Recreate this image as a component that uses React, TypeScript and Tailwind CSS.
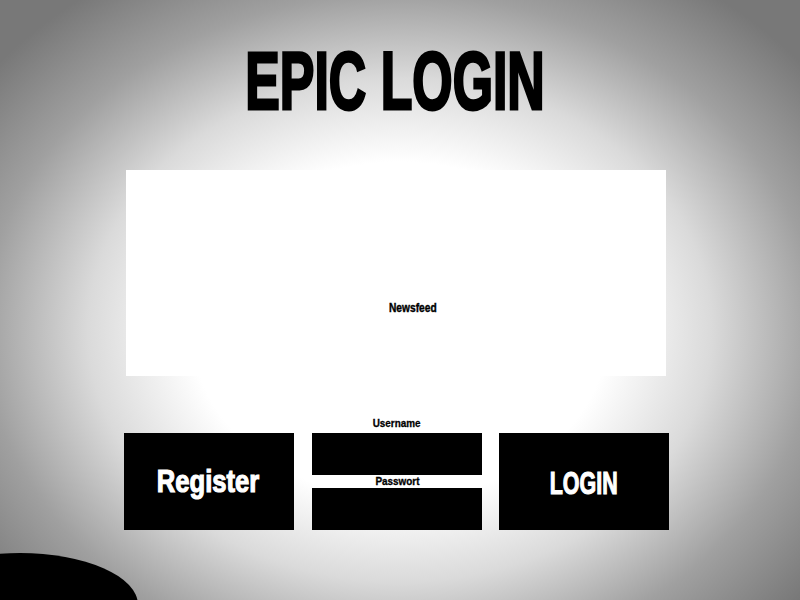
import React from "react";

const font = "font-['Liberation_Sans',Arial,sans-serif] font-bold";

const App = () => {
  return (
    <div className="relative w-[800px] h-[600px] overflow-hidden bg-[radial-gradient(ellipse_520px_420px_at_50%_55%,#ffffff_0%,#ffffff_40%,#dadada_60%,#a0a0a0_80%,#787878_100%)]">
      <div className="flex flex-col">
        {/* title */}
        <div className="mt-[41px] h-[81px] flex justify-center">
          <h1
            className={`${font} inline-block text-[81px] leading-none text-black scale-x-[0.64] [-webkit-text-stroke:3px_black] ml-[-10px]`}
          >
            EPIC LOGIN
          </h1>
        </div>

        {/* newsfeed */}
        <div className="mt-[48px] ml-[126px] w-[540px] h-[206px] bg-white">
          <div className={`${font} pt-[132px] pl-[263px] text-[12px] leading-none text-black`}>
            <span className="inline-block scale-x-[0.85] origin-left [-webkit-text-stroke:0.4px_black]">Newsfeed</span>
          </div>
        </div>

        {/* bottom row */}
        <div className="mt-[42px] ml-[124px] flex items-end">
          <button className="w-[170px] h-[97px] bg-black flex items-center justify-center">
            <span className={`${font} inline-block text-white text-[32px] leading-none scale-x-[0.8] [-webkit-text-stroke:1.2px_white] mt-[-2px] ml-[-2px]`}>
              Register
            </span>
          </button>

          <div className="ml-[18px] w-[170px] flex flex-col">
            <div className={`${font} h-[15px] text-center text-[11px] leading-none text-black`}>
              <span className="inline-block scale-x-[0.9] [-webkit-text-stroke:0.3px_black]">Username</span>
            </div>
            <input className="h-[42px] w-full bg-black outline-none text-white px-2" />
            <div className={`${font} h-[13px] text-center text-[11px] leading-none text-black`}>
              <span className="inline-block scale-x-[0.9] [-webkit-text-stroke:0.3px_black] mt-[1px]">Passwort</span>
            </div>
            <input type="password" className="h-[42px] w-full bg-black outline-none text-white px-2" />
          </div>

          <button className="ml-[17px] w-[170px] h-[97px] bg-black flex items-center justify-center">
            <span className={`${font} inline-block text-white text-[32px] leading-none scale-x-[0.67] [-webkit-text-stroke:1.2px_white] mt-[3px]`}>
              LOGIN
            </span>
          </button>
        </div>
      </div>

      {/* corner blob */}
      <div className="absolute left-[-98px] top-[553px] w-[236px] h-[104px] rounded-[50%] bg-black" />
    </div>
  );
};

export default App;
